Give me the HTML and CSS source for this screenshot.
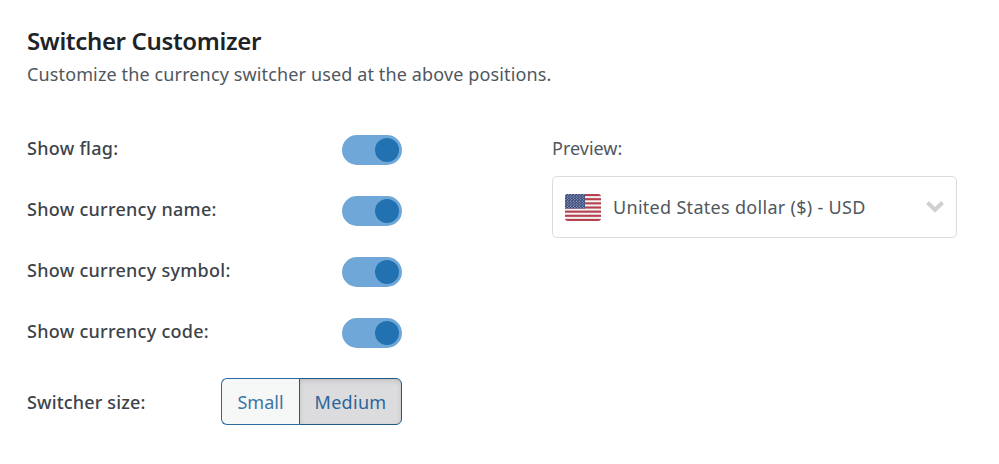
FILE: index.html
```html
<!DOCTYPE html>
<html lang="en">
<head>
<meta charset="utf-8">
<title>Switcher Customizer</title>
<link rel="stylesheet" href="styles.css">
</head>
<body>
<section class="panel">
  <h2 class="title">Switcher Customizer</h2>
  <p class="subtitle">Customize the currency switcher used at the above positions.</p>
  <div class="columns">
    <div class="options">
      <div class="row"><span class="label">Show flag:</span><span class="toggle"><span class="knob"></span></span></div>
      <div class="row"><span class="label">Show currency name:</span><span class="toggle"><span class="knob"></span></span></div>
      <div class="row"><span class="label">Show currency symbol:</span><span class="toggle"><span class="knob"></span></span></div>
      <div class="row row-last"><span class="label">Show currency code:</span><span class="toggle"><span class="knob"></span></span></div>
      <div class="row row-size"><span class="label">Switcher size:</span>
        <div class="btn-group">
          <span class="btn">Small</span>
          <span class="btn btn-active">Medium</span>
        </div>
      </div>
    </div>
    <div class="preview">
      <div class="preview-label">Preview:</div>
      <div class="select">
        <svg class="flag" viewBox="0 0 36 27" width="36" height="27" aria-hidden="true">
          <defs>
            <clipPath id="flagclip"><rect x="0" y="0" width="36" height="27" rx="3"/></clipPath>
            <pattern id="stars" width="3" height="2.6" patternUnits="userSpaceOnUse">
              <circle cx="0.8" cy="0.7" r="0.6" fill="#c3c8de"/>
              <circle cx="2.3" cy="2" r="0.6" fill="#c3c8de"/>
            </pattern>
          </defs>
          <g clip-path="url(#flagclip)">
            <rect width="36" height="27" fill="#f4f1f1"/>
            <rect y="0" width="36" height="2.1" fill="#b5404f"/>
            <rect y="4.15" width="36" height="2.1" fill="#b5404f"/>
            <rect y="8.3" width="36" height="2.1" fill="#b5404f"/>
            <rect y="12.45" width="36" height="2.1" fill="#b5404f"/>
            <rect y="16.6" width="36" height="2.1" fill="#b5404f"/>
            <rect y="20.75" width="36" height="2.1" fill="#b5404f"/>
            <rect y="24.9" width="36" height="2.1" fill="#b5404f"/>
            <rect width="20" height="14.5" fill="#2f3f74"/>
            <rect width="20" height="14.5" fill="url(#stars)"/>
          </g>
        </svg>
        <span class="select-text">United States dollar ($) - USD</span>
        <svg class="chevron" viewBox="0 0 20 13" width="20" height="13" aria-hidden="true">
          <path d="M2.5 2.5 L10 10 L17.5 2.5" fill="none" stroke="#d0d0d0" stroke-width="4"/>
        </svg>
      </div>
    </div>
  </div>
</section>
</body>
</html>
```

FILE: styles.css
```css
* { box-sizing: border-box; }
html, body { margin: 0; padding: 0; background: #fff; }
body {
  width: 999px;
  height: 464px;
  overflow: hidden;
  font-family: "Noto Sans", "Open Sans", sans-serif;
  color: #3c434a;
}
.panel { padding: 24px 42px 0 27px; }
.title {
  margin: 0;
  font-size: 24px;
  line-height: 34px;
  font-weight: 600;
  letter-spacing: -0.35px;
  color: #1d2327;
}
.subtitle {
  margin: 0;
  font-size: 18px;
  line-height: 32px;
  letter-spacing: 0.13px;
  color: #50575e;
}
.columns {
  display: flex;
  justify-content: space-between;
  margin-top: 45px;
}
.options { width: 375px; }
.row {
  display: flex;
  align-items: center;
  justify-content: space-between;
  height: 30px;
  margin-bottom: 31px;
}
.row-last { margin-bottom: 30px; }
.row-size { height: 47px; margin-bottom: 0; }
.label {
  padding-bottom: 5px;
  font-size: 18px;
  font-weight: 500;
  letter-spacing: 0.27px;
  color: #3c434a;
}
.row-size .label { padding-bottom: 0; letter-spacing: 0.15px; }
.toggle {
  display: flex;
  justify-content: flex-end;
  align-items: center;
  width: 60px;
  height: 30px;
  padding: 3px;
  border-radius: 15px;
  background: #6fa8d8;
}
.knob { width: 24px; height: 24px; border-radius: 50%; background: #2271b1; }
.btn-group { display: flex; height: 47px; }
.btn {
  display: flex;
  align-items: center;
  justify-content: center;
  font-size: 18px;
  color: #3a76a6;
  border: 1px solid #2a6a9e;
  background: #f6f7f7;
}
.btn:first-child { width: 78px; border-radius: 6px 0 0 6px; border-right: 0; }
.btn-active {
  width: 103px;
  letter-spacing: 0.3px;
  color: #2a659a;
  background: #dcdcde;
  border-color: #1f5a85;
  border-radius: 0 6px 6px 0;
  box-shadow: inset 0 2px 5px rgba(0,0,0,.12);
}
.preview { width: 405px; }
.preview-label { font-size: 18px; line-height: 26px; color: #50575e; margin-bottom: 15px; }
.select {
  display: flex;
  align-items: center;
  height: 62px;
  padding: 0 11px 0 12px;
  border: 1px solid #dcdcde;
  border-radius: 5px;
  background: #fff;
}
.flag { flex: none; }
.select-text { flex: 1; margin-left: 12px; font-size: 18px; letter-spacing: 0.3px; color: #50575e; }
.chevron { flex: none; margin-bottom: 2px; }
```
